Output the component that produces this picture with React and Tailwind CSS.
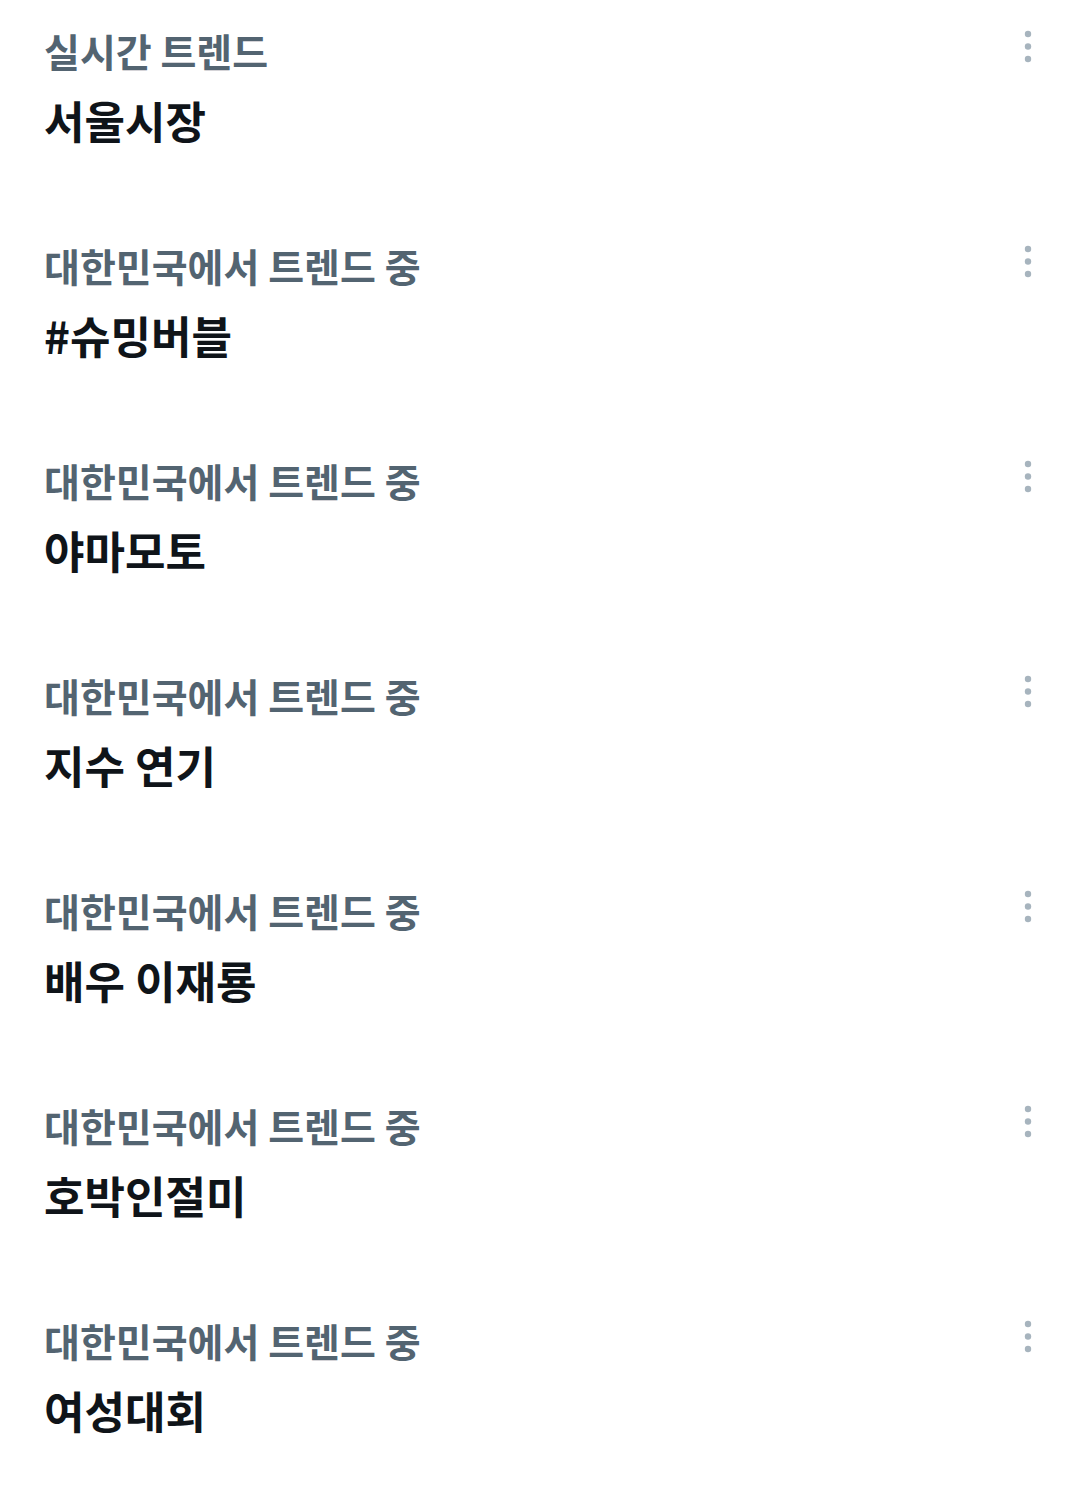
const trends = [
  { label: '실시간 트렌드', title: '서울시장' },
  { label: '대한민국에서 트렌드 중', title: '#슈밍버블' },
  { label: '대한민국에서 트렌드 중', title: '야마모토' },
  { label: '대한민국에서 트렌드 중', title: '지수 연기' },
  { label: '대한민국에서 트렌드 중', title: '배우 이재룡' },
  { label: '대한민국에서 트렌드 중', title: '호박인절미' },
  { label: '대한민국에서 트렌드 중', title: '여성대회' },
]

function MoreIcon() {
  return (
    <svg width="8" height="34" viewBox="0 0 8 34" className="mt-[29px] shrink-0 text-[#a7b4be]" fill="currentColor">
      <circle cx="4" cy="5" r="3.2" />
      <circle cx="4" cy="17.5" r="3.2" />
      <circle cx="4" cy="30" r="3.2" />
    </svg>
  )
}

function TrendRow({ label, title }) {
  return (
    <div className="flex h-[215px] items-start justify-between pl-[44px] pr-[48px]">
      <div className="pt-[25px]">
        <div className="text-[39px] font-bold leading-[50px] text-[#536471]">{label}</div>
        <div className="mt-[16px] text-[44px] font-bold leading-[58px] text-[#0f1419]">{title}</div>
      </div>
      <MoreIcon />
    </div>
  )
}

export default function App() {
  return (
    <div
      className="min-h-[1486px] w-[1080px] bg-white"
      style={{ fontFamily: '"Noto Sans CJK KR", "Noto Sans", sans-serif' }}
    >
      {trends.map((t, i) => (
        <TrendRow key={i} label={t.label} title={t.title} />
      ))}
    </div>
  )
}
